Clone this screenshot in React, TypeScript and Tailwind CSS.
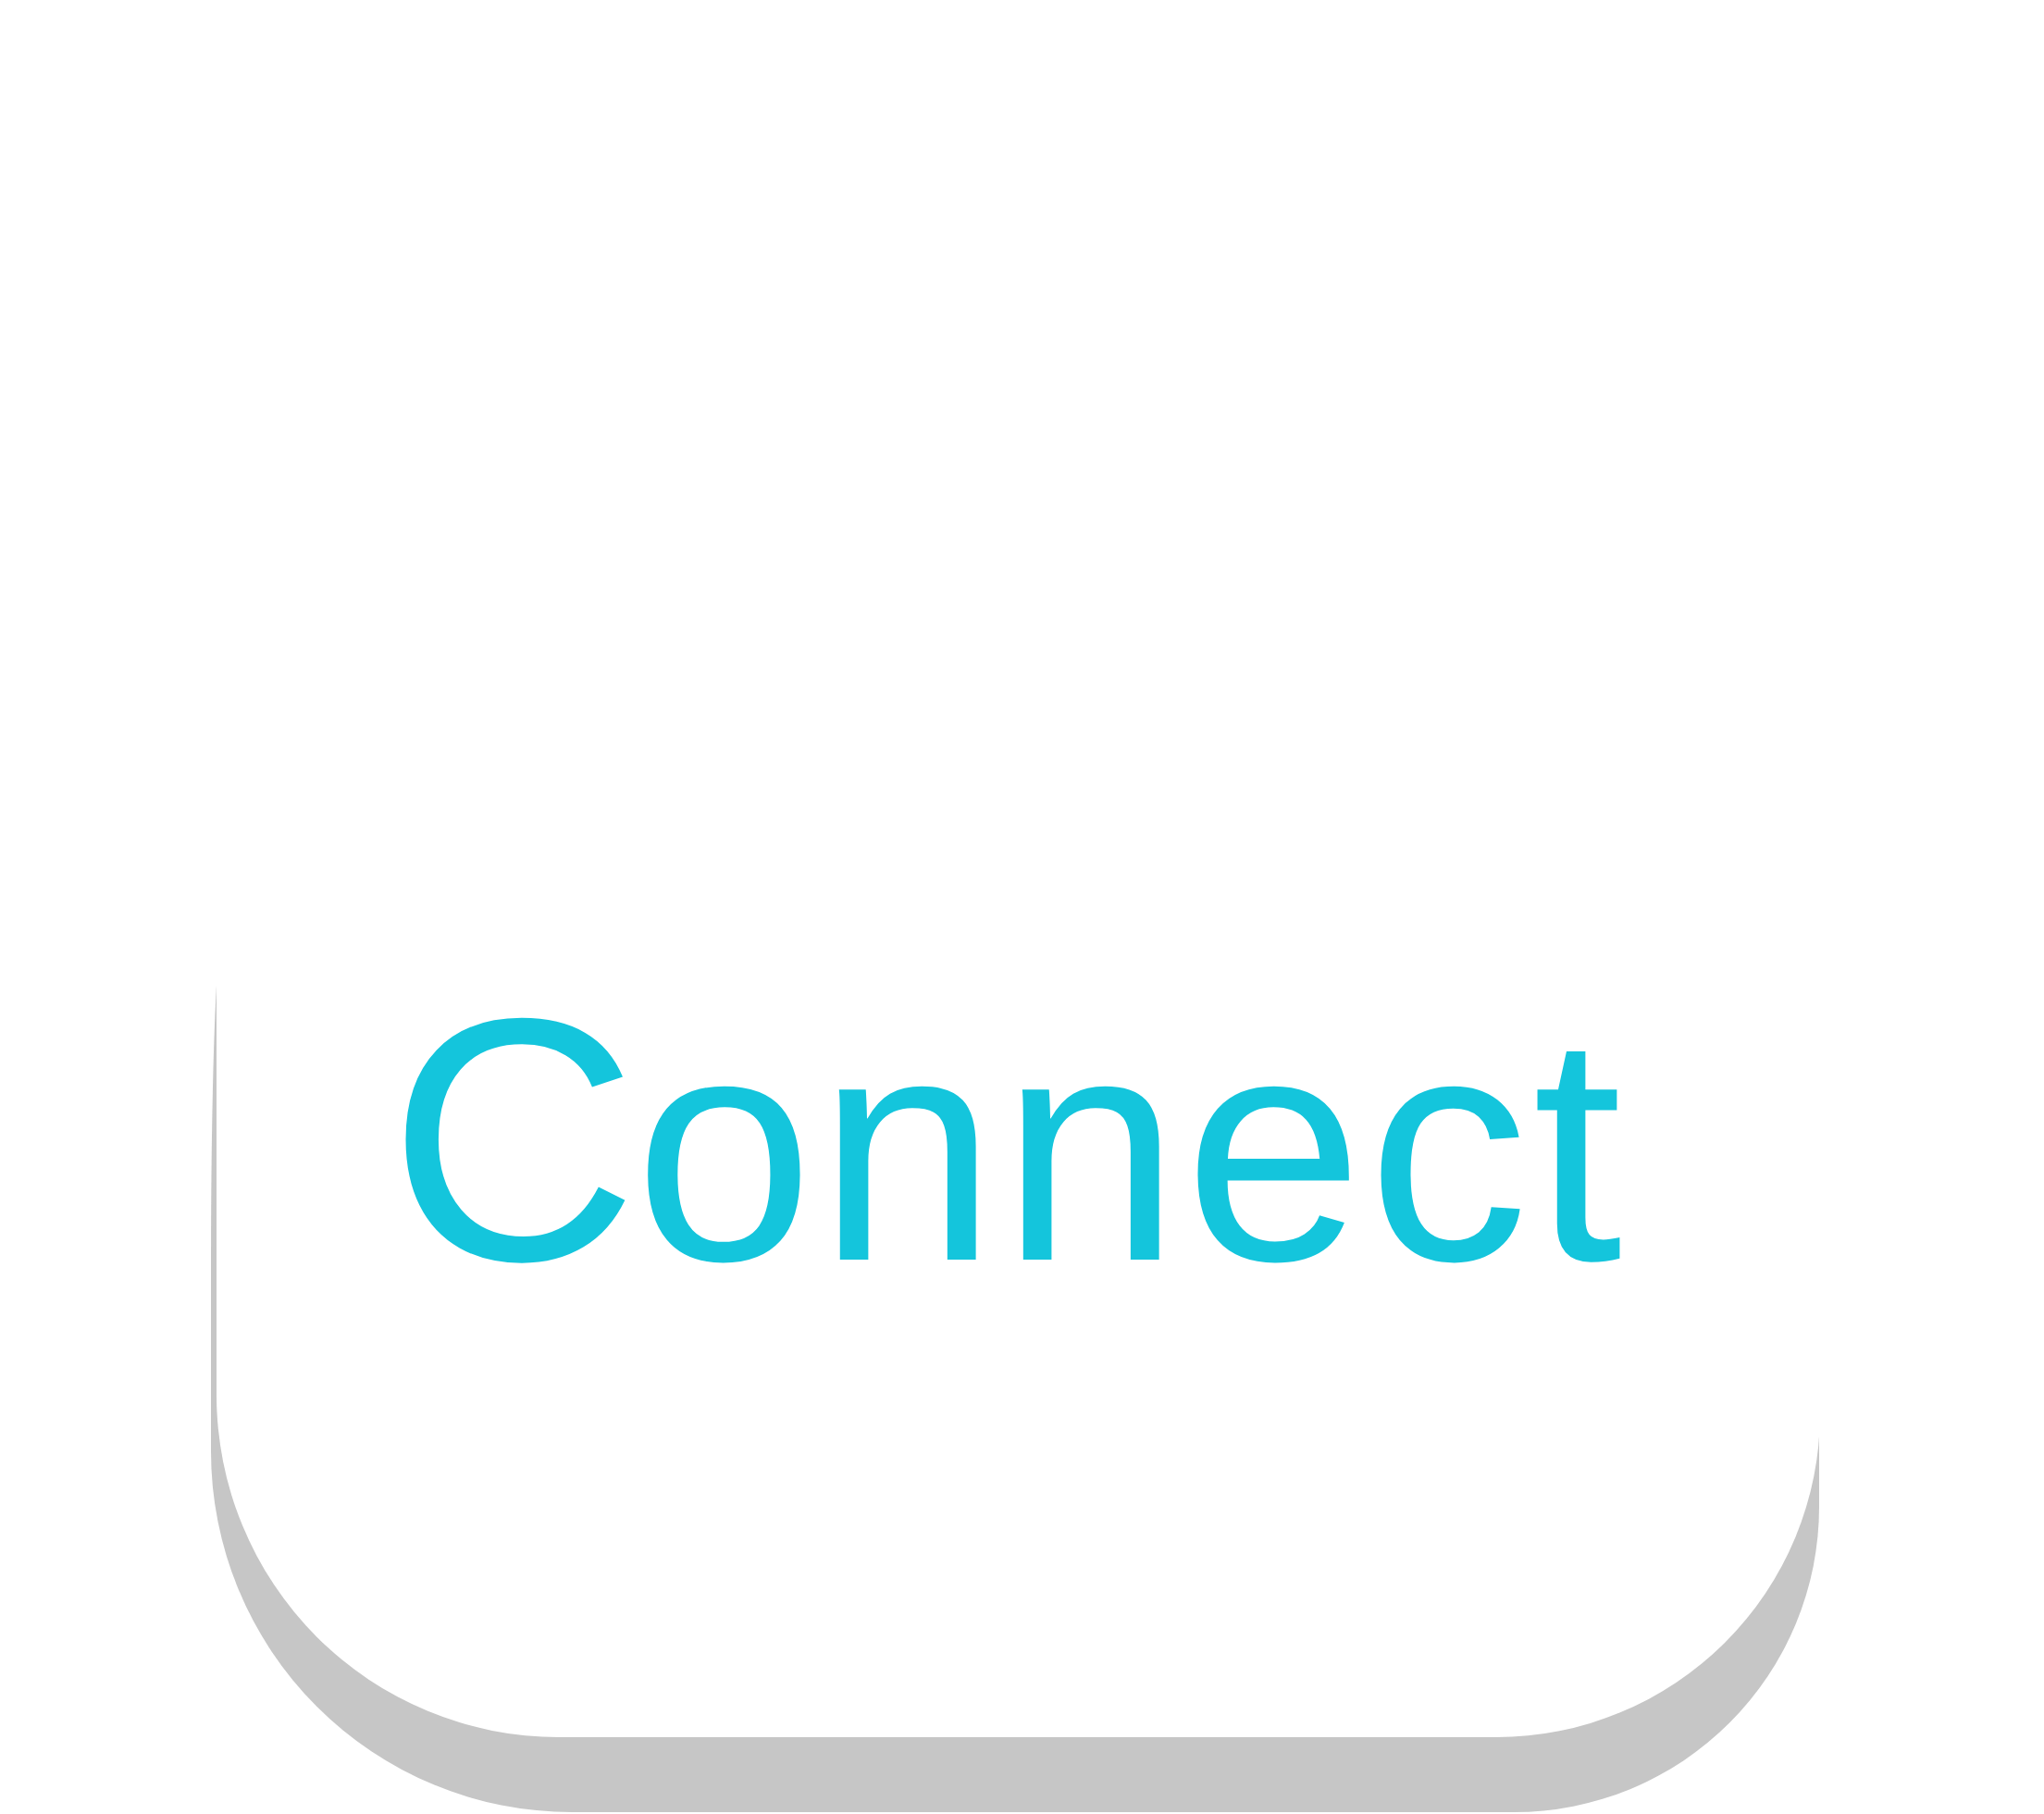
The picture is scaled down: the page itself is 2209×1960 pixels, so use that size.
export default function App() {
  return (
    <div className="w-[2209px] h-[1960px] bg-white overflow-hidden">
      <div className="relative ml-[234px] w-[1733px] h-[1877px]">
        <div className="absolute left-[-6px] right-[1px] top-[1018px] bottom-[-81px] bg-[#c6c6c6] rounded-tl-[12px_350px] rounded-bl-[390px] rounded-br-[330px]" />
        <div
          className="relative h-full bg-white rounded-bl-[370px] rounded-br-[350px] pt-[1044px] pr-[24px] flex justify-center text-[348px] leading-none text-[#14c5dc]"
          style={{ fontFamily: '"Liberation Sans", Arial, sans-serif' }}
        >
          <span className="whitespace-nowrap">
            <span className="text-[374px] leading-none tracking-[-4px]">C</span>
            <span className="tracking-[4.5px]">onnect</span>
          </span>
        </div>
      </div>
    </div>
  );
}
